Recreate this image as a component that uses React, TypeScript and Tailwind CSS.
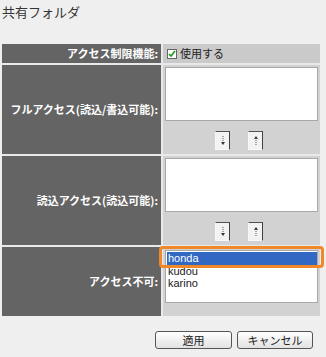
import React from "react";

const JP = "font-['Noto_Sans_CJK_JP','Noto_Sans',sans-serif]";

// Small raised move button used between the access lists.
function MoveButton({ dir }: { dir: "down" | "up" }) {
  return (
    <button className="flex h-[19px] w-[15px] items-center justify-center border border-t-[#505050] border-l-[#f8f8f8] border-r-[#404040] border-b-[#f8f8f8] bg-[#f2f2f2] p-0">
      <svg width="6" height="11" viewBox="0 0 6 11">
        {dir === "down" ? (
          <>
            <line x1="3" y1="1" x2="3" y2="8" stroke="#555" strokeWidth="1" strokeDasharray="1 1" />
            <path d="M1 7 L3 10 L5 7 Z" fill="#333" />
          </>
        ) : (
          <>
            <path d="M1 4 L3 1 L5 4 Z" fill="#333" />
            <line x1="3" y1="3" x2="3" y2="10" stroke="#555" strokeWidth="1" strokeDasharray="1 1" />
          </>
        )}
      </svg>
    </button>
  );
}

function Label({ children }: { children: React.ReactNode }) {
  return (
    <div className="flex items-center justify-end bg-[#646464] pr-[3px] text-[11px] font-bold leading-none text-white">
      {children}
    </div>
  );
}

function ListCell() {
  return (
    <div className="flex flex-col bg-[#d2d2d2] px-[2px] pt-[2px]">
      <div className="h-[54px] border border-[#a8a8a8] bg-white" />
      <div className="mt-[10px] flex justify-center gap-[18px] pr-[5px]">
        <MoveButton dir="down" />
        <MoveButton dir="up" />
      </div>
    </div>
  );
}

export default function App() {
  const denied = [
    { name: "honda", selected: true },
    { name: "kudou" },
    { name: "karino" },
  ];

  return (
    <div className={`h-[357px] w-[326px] bg-[#efefef] ${JP}`}>
      <div className="pl-[2px] pt-[4px] text-[13px] leading-[16px] text-[#333]">共有フォルダ</div>

      <div className="ml-[2px] mt-[24px] grid w-[318px] grid-cols-[159px_1fr] grid-rows-[19px_89px_89px_69px] gap-[2px] bg-[#e9e9e9]">
        <Label>アクセス制限機能:</Label>
        <div className="flex items-center gap-[3px] bg-[#cacaca] pl-[4px] text-[11px] text-[#222]">
          <span className="flex h-[10px] w-[10px] items-center justify-center border border-[#666] bg-white">
            <svg width="8" height="8" viewBox="0 0 8 8">
              <path d="M1 4 L3 6 L7 1" stroke="#1a9a1a" strokeWidth="1.6" fill="none" />
            </svg>
          </span>
          使用する
        </div>

        <Label>フルアクセス(読込/書込可能):</Label>
        <ListCell />

        <Label>読込アクセス(読込可能):</Label>
        <ListCell />

        <Label>アクセス不可:</Label>
        <div className="relative bg-[#d2d2d2] px-[2px] pt-[3px]">
          <div className="h-[53px] border border-[#a8a8a8] bg-white pt-[1px] pl-[1px] font-['Liberation_Sans',Arial,sans-serif] text-[11px] leading-[12.5px] text-[#222]">
            {denied.map((d) => (
              <div key={d.name} className={d.selected ? "bg-[#3068c4] pl-[1px] text-white" : "pl-[1px]"}>
                {d.name}
              </div>
            ))}
          </div>
          <div className="absolute left-[-4px] top-[-1px] h-[22px] w-[165px] rounded-[4px] border-[3px] border-[#f0882a]" />
        </div>
      </div>

      <div className="mt-[15px] flex justify-end gap-[5px] pr-[13px]">
        <button className="h-[18px] w-[77px] rounded-[3px] border border-[#555] bg-gradient-to-b from-white to-[#e2e2e2] text-[11px] leading-none text-[#222]">
          適用
        </button>
        <button className="h-[18px] w-[76px] rounded-[3px] border border-[#555] bg-gradient-to-b from-white to-[#e2e2e2] text-[11px] leading-none text-[#222]">
          キャンセル
        </button>
      </div>
    </div>
  );
}
